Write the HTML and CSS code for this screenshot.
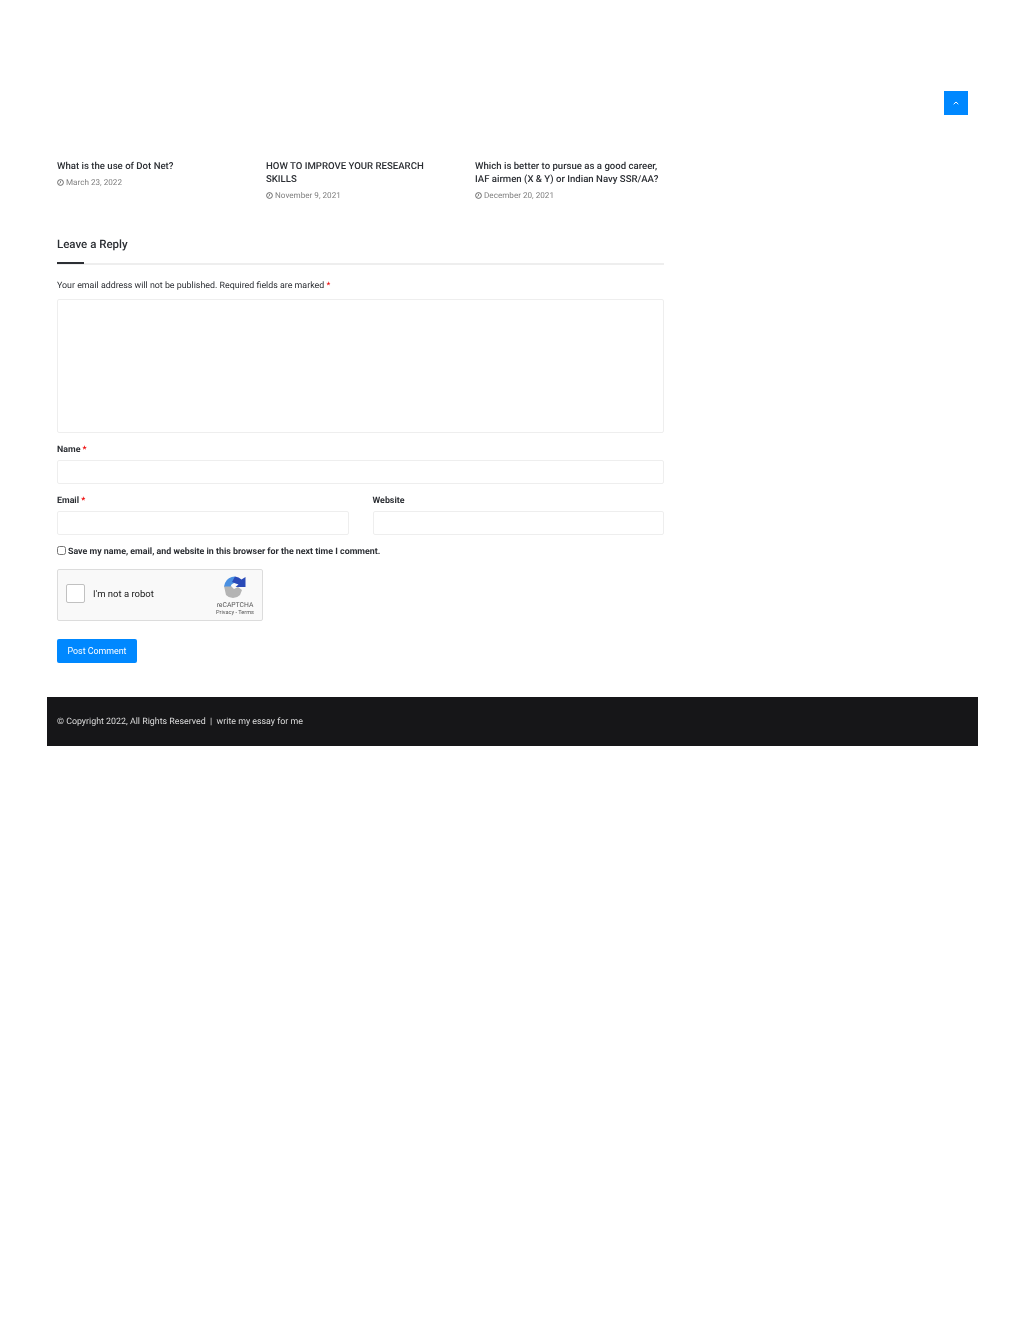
FILE: index.html
```html
<!DOCTYPE html>
<html lang="en">
  <head>
    <meta charset="UTF-8" />
    <title>Leave a Reply</title>
    <link rel="stylesheet" href="styles.css">
  </head>
  <body>
    <a class="go-top" href="#" aria-label="Back to top">
      <svg width="6" height="4" viewBox="0 0 6 4"><path d="M0.7 3.2 L3 1 L5.3 3.2" fill="none" stroke="#fff" stroke-width="1"/></svg>
    </a>

    <div class="page">
      <div class="content">
        <div class="related">
          <div class="related-item">
            <h3>What is the use of Dot Net?</h3>
            <div class="post-date">
              <svg class="clock" width="7" height="7" viewBox="0 0 8 8"><circle cx="4" cy="4" r="3.3" fill="none" stroke="#555" stroke-width="1"/><path d="M4 2.2V4.2L2.7 5" fill="none" stroke="#555" stroke-width="0.8"/></svg>
              March 23, 2022
            </div>
          </div>
          <div class="related-item">
            <h3>HOW TO IMPROVE YOUR RESEARCH SKILLS</h3>
            <div class="post-date">
              <svg class="clock" width="7" height="7" viewBox="0 0 8 8"><circle cx="4" cy="4" r="3.3" fill="none" stroke="#555" stroke-width="1"/><path d="M4 2.2V4.2L2.7 5" fill="none" stroke="#555" stroke-width="0.8"/></svg>
              November 9, 2021
            </div>
          </div>
          <div class="related-item">
            <h3>Which is better to pursue as a good career, IAF airmen (X &amp; Y) or Indian Navy SSR/AA?</h3>
            <div class="post-date">
              <svg class="clock" width="7" height="7" viewBox="0 0 8 8"><circle cx="4" cy="4" r="3.3" fill="none" stroke="#555" stroke-width="1"/><path d="M4 2.2V4.2L2.7 5" fill="none" stroke="#555" stroke-width="0.8"/></svg>
              December 20, 2021
            </div>
          </div>
        </div>

        <div class="reply">
          <h2 class="reply-title">Leave a Reply</h2>
          <p class="reply-note">Your email address will not be published. Required fields are marked <span class="req">*</span></p>
          <form>
            <textarea class="field field-comment"></textarea>
            <label class="field-label" for="author">Name <span class="req">*</span></label>
            <input class="field" type="text" id="author" />
            <div class="field-row">
              <div class="field-col">
                <label class="field-label" for="email">Email <span class="req">*</span></label>
                <input class="field" type="text" id="email" />
              </div>
              <div class="field-col">
                <label class="field-label" for="url">Website</label>
                <input class="field" type="text" id="url" />
              </div>
            </div>
            <div class="cookies">
              <input type="checkbox" id="cookies" />
              <label for="cookies">Save my name, email, and website in this browser for the next time I comment.</label>
            </div>

            <div class="captcha">
              <span class="captcha-box"></span>
              <span class="captcha-text">I'm not a robot</span>
              <div class="captcha-logo">
                <svg width="23" height="24" viewBox="0 0 23 24">
                  <path d="M1 10 H8 L11 13 L15 11 L19 14 L17 19 A9.5 9.5 0 0 1 3 19 Z" fill="#b4b4b4"/>
                  <path d="M12 0.5 A11 11 0 0 0 2 7 L1 10.5 H7.5 A5 5 0 0 1 11 7 L15 7.5 Z" fill="#4a90e2"/>
                  <path d="M12 0.5 A10 10 0 0 1 18.5 3.5 L22.5 1 V11 H12.5 L15.5 8.5 L9 6 Z" fill="#2a4ab8"/>
                </svg>
                <span class="captcha-brand">reCAPTCHA</span>
                <span class="captcha-links">Privacy - Terms</span>
              </div>
            </div>

            <button class="submit" type="button">Post Comment</button>
          </form>
        </div>
      </div>

      <footer class="site-footer">© Copyright 2022, All Rights Reserved &nbsp;|&nbsp; write my essay for me</footer>
    </div>
  </body>
</html>
```

FILE: styles.css
```css
* {
  box-sizing: border-box;
}

body {
  margin: 0;
  height: 1325px;
  background: #fff;
  color: #2c2f34;
  font-family: Roboto, "Liberation Sans", sans-serif;
  font-size: 9px;
  text-rendering: geometricPrecision;
}

.go-top {
  position: fixed;
  top: 91px;
  right: 56px;
  width: 24px;
  height: 24px;
  background: #0088ff;
  display: flex;
  align-items: center;
  justify-content: center;
}

/* the reference is a soft, rescaled capture */
.page {
  margin: 0 46px 0 47px;
  padding-top: 160px;
  filter: blur(0.3px);
}

.content {
  padding: 0 314px 0 10px;
}

/* related posts */
.related {
  display: grid;
  grid-template-columns: repeat(3, 1fr);
  column-gap: 20px;
}

.related-item h3 {
  margin: 0;
  font-size: 9.6px;
  font-weight: 500;
  line-height: 13px;
}

.post-date {
  margin-top: 4px;
  font-size: 8.15px;
  line-height: 10px;
  color: #808080;
}

.clock {
  vertical-align: -1px;
}

/* reply form */
.reply {
  margin-top: 37px;
}

.reply-title {
  margin: 0;
  position: relative;
  height: 28px;
  font-size: 11.5px;
  font-weight: 500;
  line-height: 14px;
  border-bottom: 2px solid #eee;
}

.reply-title::after {
  content: "";
  position: absolute;
  left: 0;
  bottom: -1px;
  width: 27px;
  height: 2px;
  background: #2c2f34;
}

.reply-note {
  margin: 14px 0 6px;
  font-size: 8.85px;
  line-height: 14px;
}

.req {
  color: #e00;
}

.field {
  display: block;
  width: 100%;
  height: 24px;
  padding: 0;
  background: #fff;
  border: 1px solid #eee;
  border-radius: 2px;
}

.field-comment {
  height: 134px;
  resize: none;
}

.field-label {
  display: block;
  margin: 12px 0 4px;
  font-size: 8.85px;
  font-weight: 700;
  line-height: 11px;
}

.field-row {
  display: grid;
  grid-template-columns: 1fr 1fr;
  column-gap: 24px;
}

.cookies {
  margin-top: 11px;
  display: flex;
  align-items: center;
  font-size: 8.85px;
  font-weight: 700;
  line-height: 12px;
}

.cookies input {
  margin: -3px 2px 0 0;
  width: 9px;
  height: 9px;
}

.captcha {
  margin-top: 11px;
  width: 206px;
  height: 52px;
  padding: 0 8px 3px;
  display: flex;
  align-items: center;
  background: #f9f9f9;
  border: 1px solid #dcdcdc;
  border-radius: 2px;
}

.captcha-box {
  width: 19px;
  height: 19px;
  background: #fff;
  border: 1px solid #c1c1c1;
  border-radius: 2px;
}

.captcha-text {
  margin: 1px 0 0 8px;
  font-size: 9.5px;
  color: #222;
}

.captcha-logo {
  margin: 6px 0 0 auto;
  align-self: flex-start;
  display: flex;
  flex-direction: column;
  align-items: center;
}

.captcha-brand {
  margin-top: 1px;
  font-size: 6.8px;
  line-height: 8px;
  color: #555;
}

.captcha-links {
  font-size: 5.6px;
  line-height: 8px;
  color: #555;
}

.submit {
  display: block;
  margin-top: 18px;
  width: 80px;
  height: 24px;
  padding: 0;
  background: #0088ff;
  color: #fff;
  border: none;
  border-radius: 2px;
  font-family: inherit;
  font-size: 8.85px;
}

.site-footer {
  margin-top: 34px;
  height: 49px;
  padding: 0 10px;
  display: flex;
  align-items: center;
  background: #161618;
  color: #ddd;
  font-size: 8.85px;
  white-space: pre;
}
```
